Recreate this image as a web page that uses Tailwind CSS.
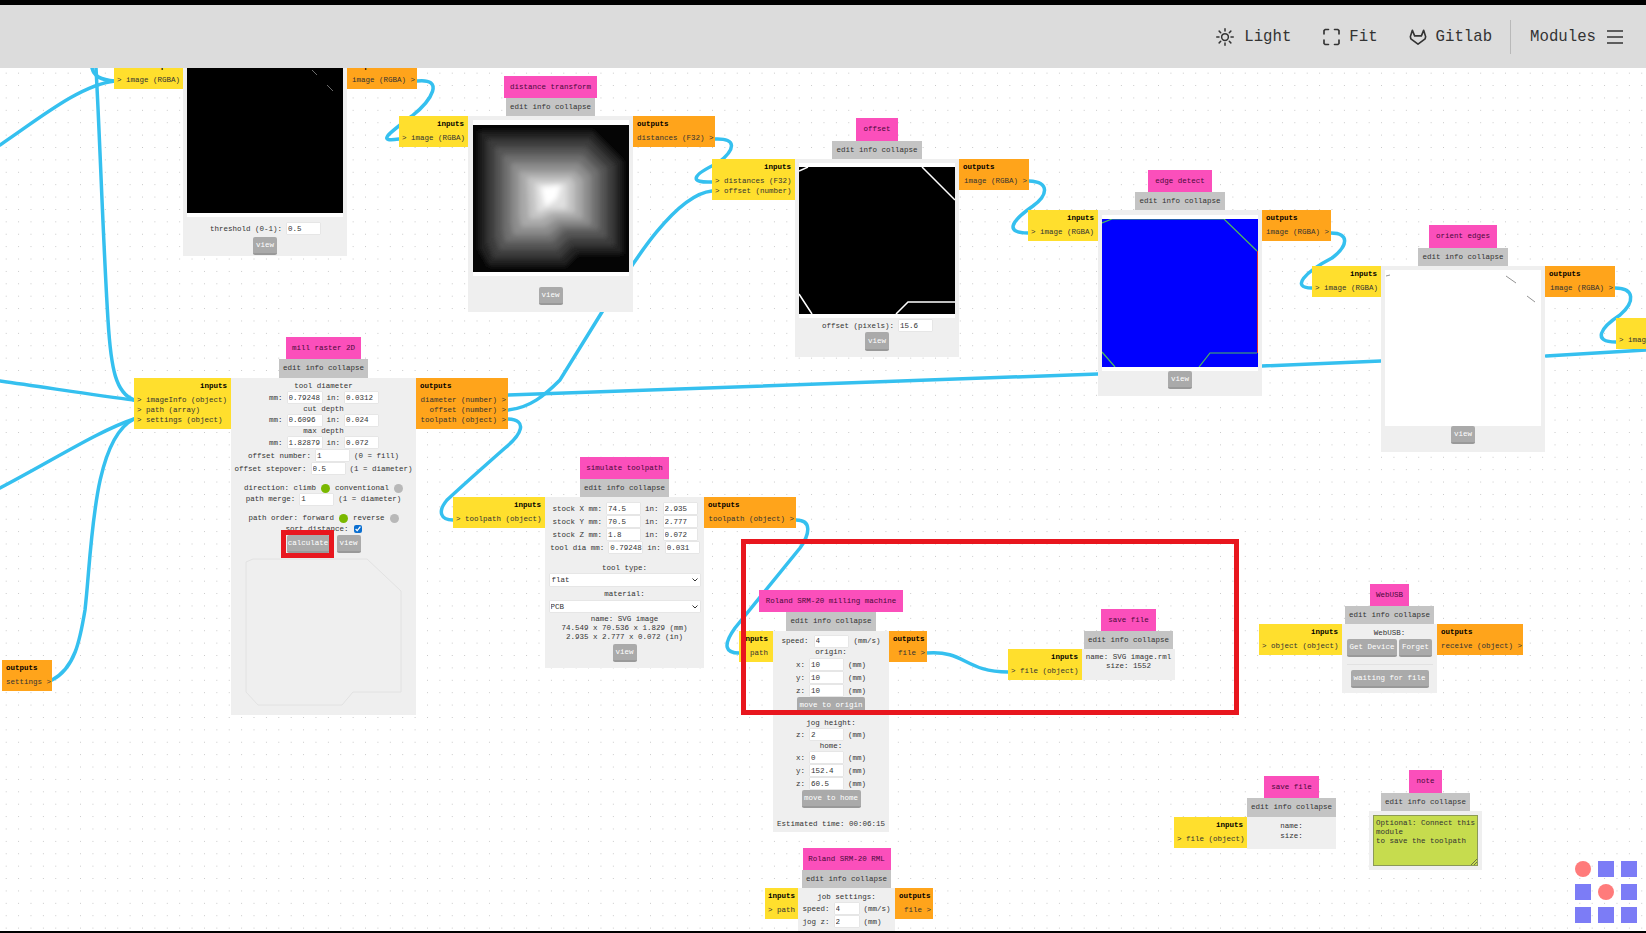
<!DOCTYPE html>
<html lang="en">
<head>
    <meta charset="UTF-8">
    <title>mods</title>
    <script src="https://cdn.jsdelivr.net/npm/@tailwindcss/browser@4"></script>
</head>
<body class="h-[933px] w-[1646px] overflow-hidden whitespace-nowrap bg-black font-['Liberation_Mono',monospace] text-[7.5px] leading-[10px] text-[#333]">

    <!-- Top bar -->
    <header class="absolute left-0 top-[5px] z-30 flex h-[63px] w-full items-center justify-end bg-[#dcdcdc] pr-[23px] text-[15.7px] text-[#333]">
        <svg class="mr-[10px] h-[18px] w-[18px]" viewBox="0 0 24 24" fill="none" stroke="#333" stroke-width="2" stroke-linecap="round"><circle cx="12" cy="12" r="4.5"/><path d="M12 1v3M12 20v3M1 12h3M20 12h3M4.2 4.2l2.1 2.1M17.7 17.7l2.1 2.1M4.2 19.8l2.1-2.1M17.7 6.3l2.1-2.1"/></svg>
        <span>Light</span>
        <svg class="ml-[31px] mr-[8px] h-[18px] w-[19px]" viewBox="0 0 24 24" fill="none" stroke="#333" stroke-width="2.2" stroke-linecap="round" stroke-linejoin="round"><path d="M8 2H3.5L2 3.5V8M16 2h4.500L22 3.500V8M8 22H3.500L2 20.500V16M16 22h4.500L22 20.500V16"/></svg>
        <span>Fit</span>
        <svg class="ml-[31px] mr-[9px] h-[18px] w-[18px]" viewBox="0 0 24 24" fill="none" stroke="#333" stroke-width="2.200" stroke-linejoin="round"><path d="M12 21.500 2.500 14.500 1.800 11.500 4.500 3l3 7.500h9l3-7.500 2.700 8.500-.7 3z"/></svg>
        <span>Gitlab</span>
        <div class="ml-[18px] mr-[19px] h-[34px] w-px bg-[#b9b9b9]"></div>
        <span>Modules</span>
        <svg class="ml-[11px] h-[14px] w-[16px]" viewBox="0 0 16 14" fill="none" stroke="#333" stroke-width="1.500"><path d="M0 1h16M0 7h16M0 13h16"/></svg>
    </header>

    <!-- Canvas -->
    <main class="absolute left-0 top-[5px] h-[926px] w-full overflow-hidden bg-white bg-[radial-gradient(circle,#c6c6c6_0.7px,transparent_0.9px)] bg-[size:12.4px_12.4px]">
        <div class="absolute left-0 top-[-5px] h-[933px] w-[1646px]">

            <!-- Wires -->
            <svg class="absolute left-0 top-0" width="1646" height="933" fill="none" stroke="#35c0ef" stroke-width="3.500" stroke-linecap="round">
                <path d="M0 145C40 118 80 85 115 81"/>
                <path d="M92 68C94 76 100 80 115 81"/>
                <path d="M96 68C100 140 103 240 108 320C111 370 116 393 134 400"/>
                <path d="M0 381C50 388 100 396 134 400"/>
                <path d="M0 488C50 462 100 430 134 419"/>
                <path d="M52 680C75 668 80 640 85 610C92 550 92 440 134 419"/>
                <path d="M417 81C445 78 432 100 412 116C385 136 378 142 399 139"/>
                <path d="M715 139C738 138 735 150 718 163C690 176 690 183 712 182"/>
                <path d="M508 395 1098 374M1262 366 1381 361M1546 356 1646 350"/>
                <path d="M508 410C530 408 545 395 560 380L602 312C620 285 670 195 712 191"/>
                <path d="M508 419C528 420 522 434 505 448C480 470 460 488 447 500C437 512 441 520 453 520"/>
                <path d="M796 520C812 520 810 534 800 548L735 628C722 646 726 653 739 653"/>
                <path d="M927 653C965 650 965 672 1008 672"/>
                <path d="M1029 181C1050 182 1048 195 1033 206C1010 222 1005 233 1028 233"/>
                <path d="M1331 233C1350 233 1348 246 1332 258C1305 272 1290 288 1312 288"/>
                <path d="M1615 288C1635 288 1635 302 1620 315C1600 328 1592 342 1616 342"/>
            </svg>

            <!-- threshold -->
            <div class="absolute left-[114px] top-[58px] grid grid-cols-[69px_164px_70px]">
                <div class="col-start-1 row-start-1 self-start bg-[#ffdf2d] pb-[4px] pl-[3px] pr-[4px] pt-[3px]">
                    <div class="mb-[4px] text-right font-bold text-black">inputs</div>
                    <div>&gt; image (RGBA)</div>
                </div>
                <div class="col-start-2 row-start-1 flex h-[198px] flex-col items-center bg-[#efefef]">
                    <div class="mb-[6px] mt-[8px] h-[151px] w-[156px] bg-white">
                        <svg width="156" height="147" viewBox="0 0 156 147"><rect width="156" height="147" fill="#000"/><path d="M125 4l5 5M140 19l6 6" stroke="#999" stroke-width=".7"/></svg>
                    </div>
                    <div class="flex items-center gap-[5px]">threshold (0-1): <input class="h-[11px] w-[33px] bg-white pl-px shadow-[0_0_1px_#bbb]" value="0.5"></div>
                    <button class="mt-[3px] h-[18px] w-[24px] rounded-[2px] border-b-2 border-[#999] bg-[#aaa] text-white">view</button>
                </div>
                <div class="col-start-3 row-start-1 self-start bg-[#ffa41b] pb-[4px] pl-[4px] pr-[2px] pt-[3px] text-right">
                    <div class="mb-[4px] text-left font-bold text-black">outputs</div>
                    <div>image (RGBA) &gt;</div>
                </div>
            </div>

            <!-- distance transform -->
            <div class="absolute left-[399px] top-[76px] grid grid-cols-[69px_165px_82px]">
                <div class="col-start-2 h-[22px] justify-self-center bg-[#fb4fbb] px-[6px] leading-[22px] text-[#4a0a3a]">distance transform</div>
                <div class="col-start-2 h-[18px] justify-self-center bg-[#c4c4c4] px-[4px] leading-[18px]">edit info collapse</div>
                <div class="col-start-1 self-start bg-[#ffdf2d] pb-[4px] pl-[3px] pr-[4px] pt-[3px]">
                    <div class="mb-[4px] text-right font-bold text-black">inputs</div>
                    <div>&gt; image (RGBA)</div>
                </div>
                <div class="col-start-2 flex h-[196px] flex-col items-center bg-[#efefef]">
                    <div class="mt-[4px] h-[156px] w-[156px] bg-white pt-[5px]">
                        <svg width="156" height="147" viewBox="0 0 156 147">
                            <defs><filter id="soft" x="-10%" y="-10%" width="120%" height="120%"><feGaussianBlur stdDeviation="2.5"/></filter></defs>
                            <rect width="156" height="147" fill="#050505"/>
                            <g filter="url(#soft)">
                                <path d="M6 6H120L150 36V129H105L93 141H16L6 124Z" fill="#222"/>
                                <path d="M14 14H117L142 39V121H100L88 133H20L14 118Z" fill="#3a3a3a"/>
                                <path d="M22 22H113L134 43V113H96L84 125H26L22 112Z" fill="#555"/>
                                <path d="M30 30H110L126 46V105H92L80 117H32L30 105Z" fill="#707070"/>
                                <path d="M38 38H106L118 50V100H88L76 110H40L38 98Z" fill="#8c8c8c"/>
                                <path d="M46 46H102L110 54V94H84L72 102H48L46 90Z" fill="#a8a8a8"/>
                                <path d="M54 52H98L102 58V88H80L68 94H56Z" fill="#c4c4c4"/>
                                <path d="M62 58H94V84H76L64 88Z" fill="#e0e0e0"/>
                                <path d="M68 62 88 60 84 74 72 82Z" fill="#fff"/>
                            </g>
                        </svg>
                    </div>
                    <button class="mt-[11px] h-[18px] w-[24px] rounded-[2px] border-b-2 border-[#999] bg-[#aaa] text-white">view</button>
                </div>
                <div class="col-start-3 self-start bg-[#ffa41b] pb-[4px] pl-[4px] pr-[2px] pt-[3px] text-right">
                    <div class="mb-[4px] text-left font-bold text-black">outputs</div>
                    <div>distances (F32) &gt;</div>
                </div>
            </div>

            <!-- offset -->
            <div class="absolute left-[712px] top-[118px] grid grid-cols-[83px_164px_70px]">
                <div class="col-start-2 h-[23px] justify-self-center bg-[#fb4fbb] px-[7px] leading-[23px] text-[#4a0a3a]">offset</div>
                <div class="col-start-2 h-[18px] justify-self-center bg-[#c4c4c4] px-[4px] leading-[18px]">edit info collapse</div>
                <div class="col-start-1 self-start bg-[#ffdf2d] pb-[4px] pl-[3px] pr-[4px] pt-[3px]">
                    <div class="mb-[4px] text-right font-bold text-black">inputs</div>
                    <div>&gt; distances (F32)</div>
                    <div>&gt; offset (number)</div>
                </div>
                <div class="col-start-2 flex h-[198px] flex-col items-center bg-[#efefef]">
                    <div class="mt-[4px] h-[155px] w-[156px] bg-white pt-[4px]">
                        <svg width="156" height="147" viewBox="0 0 156 147"><rect width="156" height="147" fill="#000"/><path d="M0 4 9 0M123 0 156 33M0 127 13 147M97 147 109 135H156" stroke="#fff" stroke-width="1.500" fill="none"/></svg>
                    </div>
                    <div class="mt-[2px] flex items-center gap-[5px]">offset (pixels): <input class="h-[11px] w-[33px] bg-white pl-px shadow-[0_0_1px_#bbb]" value="15.6"></div>
                    <button class="mt-px h-[19px] w-[24px] rounded-[2px] border-b-2 border-[#999] bg-[#aaa] text-white">view</button>
                </div>
                <div class="col-start-3 self-start bg-[#ffa41b] pb-[4px] pl-[4px] pr-[2px] pt-[3px] text-right">
                    <div class="mb-[4px] text-left font-bold text-black">outputs</div>
                    <div>image (RGBA) &gt;</div>
                </div>
            </div>

            <!-- edge detect -->
            <div class="absolute left-[1028px] top-[170px] grid grid-cols-[70px_164px_69px]">
                <div class="col-start-2 h-[22px] justify-self-center bg-[#fb4fbb] px-[7px] leading-[22px] text-[#4a0a3a]">edge detect</div>
                <div class="col-start-2 h-[18px] justify-self-center bg-[#c4c4c4] px-[4px] leading-[18px]">edit info collapse</div>
                <div class="col-start-1 self-start bg-[#ffdf2d] pb-[4px] pl-[3px] pr-[4px] pt-[3px]">
                    <div class="mb-[4px] text-right font-bold text-black">inputs</div>
                    <div>&gt; image (RGBA)</div>
                </div>
                <div class="col-start-2 flex h-[186px] flex-col items-center bg-[#efefef]">
                    <div class="mt-[5px] h-[156px] w-[156px] bg-white pt-[4px]">
                        <svg width="156" height="148" viewBox="0 0 156 148"><rect width="156" height="148" fill="#00f"/><path d="M0 4 10 0H122L155 32M0 133 13 148M97 148 108 134H155" stroke="#4cbb5c" stroke-width="1.200" fill="none"/><path d="M155.500 32V134" stroke="#e03030"/></svg>
                    </div>
                    <button class="h-[18px] w-[24px] rounded-[2px] border-b-2 border-[#999] bg-[#aaa] text-white">view</button>
                </div>
                <div class="col-start-3 self-start bg-[#ffa41b] pb-[4px] pl-[4px] pr-[2px] pt-[3px] text-right">
                    <div class="mb-[4px] text-left font-bold text-black">outputs</div>
                    <div>image (RGBA) &gt;</div>
                </div>
            </div>

            <!-- orient edges -->
            <div class="absolute left-[1312px] top-[225px] grid grid-cols-[69px_164px_70px]">
                <div class="col-start-2 h-[23px] justify-self-center bg-[#fb4fbb] px-[7px] leading-[23px] text-[#4a0a3a]">orient edges</div>
                <div class="col-start-2 h-[18px] justify-self-center bg-[#c4c4c4] px-[4px] leading-[18px]">edit info collapse</div>
                <div class="col-start-1 self-start bg-[#ffdf2d] pb-[4px] pl-[3px] pr-[4px] pt-[3px]">
                    <div class="mb-[4px] text-right font-bold text-black">inputs</div>
                    <div>&gt; image (RGBA)</div>
                </div>
                <div class="col-start-2 flex h-[186px] flex-col items-center bg-[#efefef]">
                    <div class="mt-[4px] h-[156px] w-[156px] bg-white">
                        <svg width="156" height="156" viewBox="0 0 156 156"><path d="M121 6l10 7M142 26l8 6M1 6l4-1" stroke="#777" stroke-width=".8" fill="none"/></svg>
                    </div>
                    <button class="h-[18px] w-[24px] rounded-[2px] border-b-2 border-[#999] bg-[#aaa] text-white">view</button>
                </div>
                <div class="col-start-3 self-start bg-[#ffa41b] pb-[4px] pl-[4px] pr-[2px] pt-[3px] text-right">
                    <div class="mb-[4px] text-left font-bold text-black">outputs</div>
                    <div>image (RGBA) &gt;</div>
                </div>
            </div>

            <!-- next module, cut off by the window edge -->
            <div class="absolute left-[1616px] top-[318px] w-[70px] bg-[#ffdf2d] pb-[4px] pl-[3px] pr-[4px] pt-[3px]">
                <div class="mb-[4px] text-right font-bold text-black">inputs</div>
                <div>&gt; image (RGBA)</div>
            </div>

            <!-- settings output, module above it is off screen -->
            <div class="absolute left-[2px] top-[660px] w-[50px] bg-[#ffa41b] pb-[4px] pl-[4px] pr-[2px] pt-[3px] text-right">
                <div class="mb-[4px] text-left font-bold text-black">outputs</div>
                <div>settings &gt;</div>
            </div>

            <!-- mill raster 2D -->
            <div class="absolute left-[134px] top-[337px] grid grid-cols-[97px_185px_92px]">
                <div class="col-start-2 h-[22px] justify-self-center bg-[#fb4fbb] px-[6px] leading-[22px] text-[#4a0a3a]">mill raster 2D</div>
                <div class="col-start-2 h-[19px] justify-self-center bg-[#c4c4c4] px-[4px] leading-[19px]">edit info collapse</div>
                <div class="col-start-1 self-start bg-[#ffdf2d] pb-[4px] pl-[3px] pr-[4px] pt-[3px]">
                    <div class="mb-[4px] text-right font-bold text-black">inputs</div>
                    <div>&gt; imageInfo (object)</div>
                    <div>&gt; path (array)</div>
                    <div>&gt; settings (object)</div>
                </div>
                <div class="col-start-2 flex h-[337px] flex-col items-center bg-[#efefef] pt-[3px]">
                    <div class="leading-[10px]">tool diameter</div>
                    <div class="flex h-[13px] items-center gap-[5px]">mm: <input class="h-[11px] w-[34px] bg-white pl-px shadow-[0_0_1px_#bbb]" value="0.79248"> in: <input class="h-[11px] w-[33px] bg-white pl-px shadow-[0_0_1px_#bbb]" value="0.0312"></div>
                    <div>cut depth</div>
                    <div class="flex h-[12px] items-center gap-[5px]">mm: <input class="h-[11px] w-[34px] bg-white pl-px shadow-[0_0_1px_#bbb]" value="0.6096"> in: <input class="h-[11px] w-[33px] bg-white pl-px shadow-[0_0_1px_#bbb]" value="0.024"></div>
                    <div>max depth</div>
                    <div class="flex h-[13px] items-center gap-[5px]">mm: <input class="h-[11px] w-[34px] bg-white pl-px shadow-[0_0_1px_#bbb]" value="1.82879"> in: <input class="h-[11px] w-[33px] bg-white pl-px shadow-[0_0_1px_#bbb]" value="0.072"></div>
                    <div class="flex h-[13px] items-center gap-[5px]">offset number: <input class="h-[11px] w-[33px] bg-white pl-px shadow-[0_0_1px_#bbb]" value="1"> (0 = fill)</div>
                    <div class="flex h-[13px] items-center gap-[5px]">offset stepover: <input class="h-[11px] w-[33px] bg-white pl-px shadow-[0_0_1px_#bbb]" value="0.5"> (1 = diameter)</div>
                    <div class="mt-[7px] flex h-[12px] items-center gap-[5px]">direction: climb <span class="h-[9px] w-[9px] rounded-full bg-[#7ab800]"></span> conventional <span class="h-[9px] w-[9px] rounded-full bg-[#b8b8b8]"></span></div>
                    <div class="flex h-[10px] items-center gap-[5px]">path merge: <input class="h-[11px] w-[33px] bg-white pl-px shadow-[0_0_1px_#bbb]" value="1"> (1 = diameter)</div>
                    <div class="mt-[8px] flex h-[12px] items-center gap-[5px]">path order: forward <span class="h-[9px] w-[9px] rounded-full bg-[#7ab800]"></span> reverse <span class="h-[9px] w-[9px] rounded-full bg-[#b8b8b8]"></span></div>
                    <div class="flex h-[10px] items-center gap-[5px]">sort distance: <input type="checkbox" checked class="h-[8px] w-[8px] accent-[#0b6fd0]"></div>
                    <div class="mt-px flex gap-[7px]">
                        <button class="h-[18px] w-[43px] rounded-[2px] border-b-2 border-[#999] bg-[#aaa] text-white">calculate</button>
                        <button class="h-[18px] w-[24px] rounded-[2px] border-b-2 border-[#999] bg-[#aaa] text-white">view</button>
                    </div>
                    <svg class="mt-[4px]" width="160" height="150" viewBox="244 558 160 150"><path d="M253 560H367L401 592V693H353L342 706H258L246 693V563Z" fill="none" stroke="#e2e2e2"/></svg>
                </div>
                <div class="col-start-3 self-start bg-[#ffa41b] pb-[4px] pl-[4px] pr-[2px] pt-[3px] text-right">
                    <div class="mb-[4px] text-left font-bold text-black">outputs</div>
                    <div>diameter (number) &gt;</div>
                    <div>offset (number) &gt;</div>
                    <div>toolpath (object) &gt;</div>
                </div>
            </div>

            <!-- simulate toolpath -->
            <div class="absolute left-[453px] top-[457px] grid grid-cols-[92px_159px_92px]">
                <div class="col-start-2 h-[22px] w-[89px] justify-self-center bg-[#fb4fbb] text-center leading-[22px] text-[#4a0a3a]">simulate toolpath</div>
                <div class="col-start-2 h-[18px] justify-self-center bg-[#c4c4c4] px-[4px] leading-[18px]">edit info collapse</div>
                <div class="col-start-1 self-start bg-[#ffdf2d] pb-[4px] pl-[3px] pr-[4px] pt-[3px]">
                    <div class="mb-[4px] text-right font-bold text-black">inputs</div>
                    <div>&gt; toolpath (object)</div>
                </div>
                <div class="col-start-2 flex h-[171px] flex-col items-center bg-[#efefef] pt-[5px]">
                    <div class="flex h-[13px] items-center gap-[5px]">stock X mm: <input class="h-[11px] w-[33px] bg-white pl-px shadow-[0_0_1px_#bbb]" value="74.5"> in: <input class="h-[11px] w-[33px] bg-white pl-px shadow-[0_0_1px_#bbb]" value="2.935"></div>
                    <div class="flex h-[13px] items-center gap-[5px]">stock Y mm: <input class="h-[11px] w-[33px] bg-white pl-px shadow-[0_0_1px_#bbb]" value="70.5"> in: <input class="h-[11px] w-[33px] bg-white pl-px shadow-[0_0_1px_#bbb]" value="2.777"></div>
                    <div class="flex h-[13px] items-center gap-[5px]">stock Z mm: <input class="h-[11px] w-[33px] bg-white pl-px shadow-[0_0_1px_#bbb]" value="1.8"> in: <input class="h-[11px] w-[33px] bg-white pl-px shadow-[0_0_1px_#bbb]" value="0.072"></div>
                    <div class="flex h-[13px] items-center gap-[5px]">tool dia mm: <input class="h-[11px] w-[33px] bg-white pl-px shadow-[0_0_1px_#bbb]" value="0.79248"> in: <input class="h-[11px] w-[33px] bg-white pl-px shadow-[0_0_1px_#bbb]" value="0.031"></div>
                    <div class="mt-[9px] h-[10px]">tool type:</div>
                    <div class="relative mt-px w-[150px]">
                        <select class="block h-[12px] w-full appearance-none bg-white pl-[2px] shadow-[0_0_1px_#bbb]"><option>flat</option></select>
                        <svg class="absolute right-[2px] top-[4px]" width="6" height="4" viewBox="0 0 6 4" fill="none" stroke="#333" stroke-width="1"><path d="M.5.5 3 3 5.500.5"/></svg>
                    </div>
                    <div class="mt-[3px] h-[10px]">material:</div>
                    <div class="relative mt-[2px] w-[150px]">
                        <select class="block h-[11px] w-full appearance-none bg-white pl-px shadow-[0_0_1px_#bbb]"><option>PCB</option></select>
                        <svg class="absolute right-[2px] top-[4px]" width="6" height="4" viewBox="0 0 6 4" fill="none" stroke="#333" stroke-width="1"><path d="M.5.5 3 3 5.500.5"/></svg>
                    </div>
                    <div class="mt-[3px] h-[9px] leading-[9px]">name: SVG image</div>
                    <div class="h-[9px] leading-[9px]">74.549 x 70.536 x 1.829 (mm)</div>
                    <div class="h-[9px] leading-[9px]">2.935 x 2.777 x 0.072 (in)</div>
                    <button class="mt-[2px] h-[18px] w-[24px] rounded-[2px] border-b-2 border-[#999] bg-[#aaa] text-white">view</button>
                </div>
                <div class="col-start-3 self-start bg-[#ffa41b] pb-[4px] pl-[4px] pr-[2px] pt-[3px] text-right">
                    <div class="mb-[4px] text-left font-bold text-black">outputs</div>
                    <div>toolpath (object) &gt;</div>
                </div>
            </div>

            <!-- Roland SRM-20 milling machine -->
            <div class="absolute left-[739px] top-[590px] grid grid-cols-[34px_116px_38px]">
                <div class="col-start-2 h-[22px] justify-self-center bg-[#fb4fbb] px-[7px] leading-[22px] text-[#4a0a3a]">Roland SRM-20 milling machine</div>
                <div class="col-start-2 h-[19px] justify-self-center bg-[#c4c4c4] px-[4px] leading-[19px]">edit info collapse</div>
                <div class="col-start-1 self-start bg-[#ffdf2d] pb-[4px] pr-[5px] pt-[3px] text-right">
                    <div class="mb-[4px] font-bold text-black">inputs</div>
                    <div>&gt; path</div>
                </div>
                <div class="col-start-2 flex h-[201px] flex-col items-center bg-[#efefef] pt-[4px]">
                    <div class="flex h-[12px] items-center gap-[6px]">speed: <input class="h-[11px] w-[33px] bg-white pl-px shadow-[0_0_1px_#bbb]" value="4"> (mm/s)</div>
                    <div class="h-[11px]">origin:</div>
                    <div class="flex h-[13px] items-center gap-[5px]">x: <input class="h-[11px] w-[33px] bg-white pl-px shadow-[0_0_1px_#bbb]" value="10"> (mm)</div>
                    <div class="flex h-[13px] items-center gap-[5px]">y: <input class="h-[11px] w-[33px] bg-white pl-px shadow-[0_0_1px_#bbb]" value="10"> (mm)</div>
                    <div class="flex h-[13px] items-center gap-[5px]">z: <input class="h-[11px] w-[33px] bg-white pl-px shadow-[0_0_1px_#bbb]" value="10"> (mm)</div>
                    <button class="h-[18px] w-[68px] rounded-[2px] border-b-2 border-[#999] bg-[#aaa] text-white">move to origin</button>
                    <div class="mt-[3px] h-[10px]">jog height:</div>
                    <div class="flex h-[13px] items-center gap-[5px]">z: <input class="h-[11px] w-[33px] bg-white pl-px shadow-[0_0_1px_#bbb]" value="2"> (mm)</div>
                    <div class="h-[10px]">home:</div>
                    <div class="flex h-[13px] items-center gap-[5px]">x: <input class="h-[11px] w-[33px] bg-white pl-px shadow-[0_0_1px_#bbb]" value="0"> (mm)</div>
                    <div class="flex h-[13px] items-center gap-[5px]">y: <input class="h-[11px] w-[33px] bg-white pl-px shadow-[0_0_1px_#bbb]" value="152.4"> (mm)</div>
                    <div class="flex h-[13px] items-center gap-[5px]">z: <input class="h-[11px] w-[33px] bg-white pl-px shadow-[0_0_1px_#bbb]" value="60.5"> (mm)</div>
                    <button class="h-[18px] w-[59px] rounded-[2px] border-b-2 border-[#999] bg-[#aaa] text-white">move to home</button>
                    <div class="mt-[11px]">Estimated time: 00:06:15</div>
                </div>
                <div class="col-start-3 self-start bg-[#ffa41b] pb-[4px] pl-[4px] pr-[2px] pt-[3px] text-right">
                    <div class="mb-[4px] text-left font-bold text-black">outputs</div>
                    <div>file &gt;</div>
                </div>
            </div>

            <!-- save file (inside the red box) -->
            <div class="absolute left-[1008px] top-[609px] grid grid-cols-[74px_93px]">
                <div class="col-start-2 h-[22px] justify-self-center bg-[#fb4fbb] px-[7px] leading-[22px] text-[#4a0a3a]">save file</div>
                <div class="col-start-2 h-[18px] justify-self-center bg-[#c4c4c4] px-[4px] leading-[18px]">edit info collapse</div>
                <div class="col-start-1 self-start bg-[#ffdf2d] pb-[4px] pl-[3px] pr-[4px] pt-[3px]">
                    <div class="mb-[4px] text-right font-bold text-black">inputs</div>
                    <div>&gt; file (object)</div>
                </div>
                <div class="col-start-2 h-[31px] bg-[#efefef] pt-[4px] text-center leading-[9px]">
                    <div>name: SVG image.rml</div>
                    <div>size: 1552</div>
                </div>
            </div>

            <!-- WebUSB -->
            <div class="absolute left-[1259px] top-[584px] grid grid-cols-[83px_95px_86px]">
                <div class="col-start-2 h-[22px] justify-self-center bg-[#fb4fbb] px-[6px] leading-[22px] text-[#4a0a3a]">WebUSB</div>
                <div class="col-start-2 h-[18px] justify-self-center bg-[#c4c4c4] px-[4px] leading-[18px]">edit info collapse</div>
                <div class="col-start-1 self-start bg-[#ffdf2d] pb-[4px] pl-[3px] pr-[4px] pt-[3px]">
                    <div class="mb-[4px] text-right font-bold text-black">inputs</div>
                    <div>&gt; object (object)</div>
                </div>
                <div class="col-start-2 flex h-[69px] flex-col items-center bg-[#efefef] pt-[4px]">
                    <div>WebUSB:</div>
                    <div class="mt-px flex gap-[2px]">
                        <button class="h-[18px] w-[50px] rounded-[2px] border-b-2 border-[#999] bg-[#aaa] text-white">Get Device</button>
                        <button class="h-[18px] w-[33px] rounded-[2px] border-b-2 border-[#999] bg-[#aaa] text-white">Forget</button>
                    </div>
                    <div class="mt-[7px] h-px w-[86px] bg-[#e2e2e2]"></div>
                    <button class="mt-[5px] h-[18px] w-[78px] rounded-[2px] border-b-2 border-[#999] bg-[#aaa] text-white">waiting for file</button>
                </div>
                <div class="col-start-3 self-start bg-[#ffa41b] pb-[4px] pl-[4px] pr-[2px] pt-[3px] text-right">
                    <div class="mb-[4px] text-left font-bold text-black">outputs</div>
                    <div>receive (object) &gt;</div>
                </div>
            </div>

            <!-- save file -->
            <div class="absolute left-[1174px] top-[776px] grid grid-cols-[73px_89px]">
                <div class="col-start-2 h-[22px] justify-self-center bg-[#fb4fbb] px-[7px] leading-[22px] text-[#4a0a3a]">save file</div>
                <div class="col-start-2 h-[19px] justify-self-center bg-[#c4c4c4] px-[4px] leading-[19px]">edit info collapse</div>
                <div class="col-start-1 self-start bg-[#ffdf2d] pb-[4px] pl-[3px] pr-[4px] pt-[3px]">
                    <div class="mb-[4px] text-right font-bold text-black">inputs</div>
                    <div>&gt; file (object)</div>
                </div>
                <div class="col-start-2 h-[32px] bg-[#efefef] pt-[4px] text-center">
                    <div>name:</div>
                    <div>size:</div>
                </div>
            </div>

            <!-- note -->
            <div class="absolute left-[1369px] top-[770px] flex w-[113px] flex-col items-center">
                <div class="h-[23px] bg-[#fb4fbb] px-[7px] leading-[23px] text-[#4a0a3a]">note</div>
                <div class="h-[18px] bg-[#c4c4c4] px-[4px] leading-[18px]">edit info collapse</div>
                <div class="w-full bg-[#efefef] px-[4px] pb-[4px] pt-[4px]">
                    <div class="relative h-[51px] w-[105px] whitespace-normal border border-[#8c9a56] bg-[#c6dc4e] pl-[2px] pt-[3px] leading-[9px]">
                        Optional: Connect this module<br>to save the toolpath
                        <svg class="absolute bottom-0 right-0" width="6" height="6" viewBox="0 0 6 6" stroke="#444" stroke-width=".7"><path d="M0 6 6 0M3 6l3-3"/></svg>
                    </div>
                </div>
            </div>

            <!-- Roland SRM-20 RML -->
            <div class="absolute left-[765px] top-[848px] grid grid-cols-[33px_97px_38px]">
                <div class="col-start-2 h-[22px] w-[88px] justify-self-center bg-[#fb4fbb] text-center leading-[22px] text-[#4a0a3a]">Roland SRM-20 RML</div>
                <div class="col-start-2 h-[18px] w-[89px] justify-self-center bg-[#c4c4c4] text-center leading-[18px]">edit info collapse</div>
                <div class="col-start-1 self-start bg-[#ffdf2d] pb-[4px] pl-[3px] pr-[3px] pt-[3px] text-right">
                    <div class="mb-[4px] font-bold text-black">inputs</div>
                    <div>&gt; path</div>
                </div>
                <div class="col-start-2 flex h-[60px] flex-col items-center bg-[#efefef] pt-[4px]">
                    <div class="h-[10px]">job settings:</div>
                    <div class="flex h-[13px] items-center gap-[5px]">speed: <input class="h-[11px] w-[24px] bg-white pl-px shadow-[0_0_1px_#bbb]" value="4"> (mm/s)</div>
                    <div class="flex h-[13px] items-center gap-[5px]">jog z: <input class="h-[11px] w-[24px] bg-white pl-px shadow-[0_0_1px_#bbb]" value="2"> (mm)&nbsp;&nbsp;</div>
                </div>
                <div class="col-start-3 self-start bg-[#ffa41b] pb-[4px] pl-[4px] pr-[2px] pt-[3px] text-right">
                    <div class="mb-[4px] text-left font-bold text-black">outputs</div>
                    <div>file &gt;</div>
                </div>
            </div>

            <!-- Red annotation boxes drawn over the screenshot -->
            <div class="absolute left-[281px] top-[530px] h-[28px] w-[53px] border-[5px] border-[#e8161e]"></div>
            <div class="absolute left-[741px] top-[539px] h-[176px] w-[498px] border-[5px] border-[#e8161e]"></div>

            <!-- Logo -->
            <div class="absolute left-[1575px] top-[861px] grid grid-cols-[16px_16px_16px] gap-[7px]">
                <span class="h-[16px] rounded-full bg-[#ff7b7b]"></span>
                <span class="h-[16px] bg-[#7c7cf6]"></span>
                <span class="h-[16px] bg-[#7c7cf6]"></span>
                <span class="h-[16px] bg-[#7c7cf6]"></span>
                <span class="h-[16px] rounded-full bg-[#ff7b7b]"></span>
                <span class="h-[16px] bg-[#7c7cf6]"></span>
                <span class="h-[16px] bg-[#7c7cf6]"></span>
                <span class="h-[16px] bg-[#7c7cf6]"></span>
                <span class="h-[16px] bg-[#7c7cf6]"></span>
            </div>
        </div>
    </main>
</body>
</html>
